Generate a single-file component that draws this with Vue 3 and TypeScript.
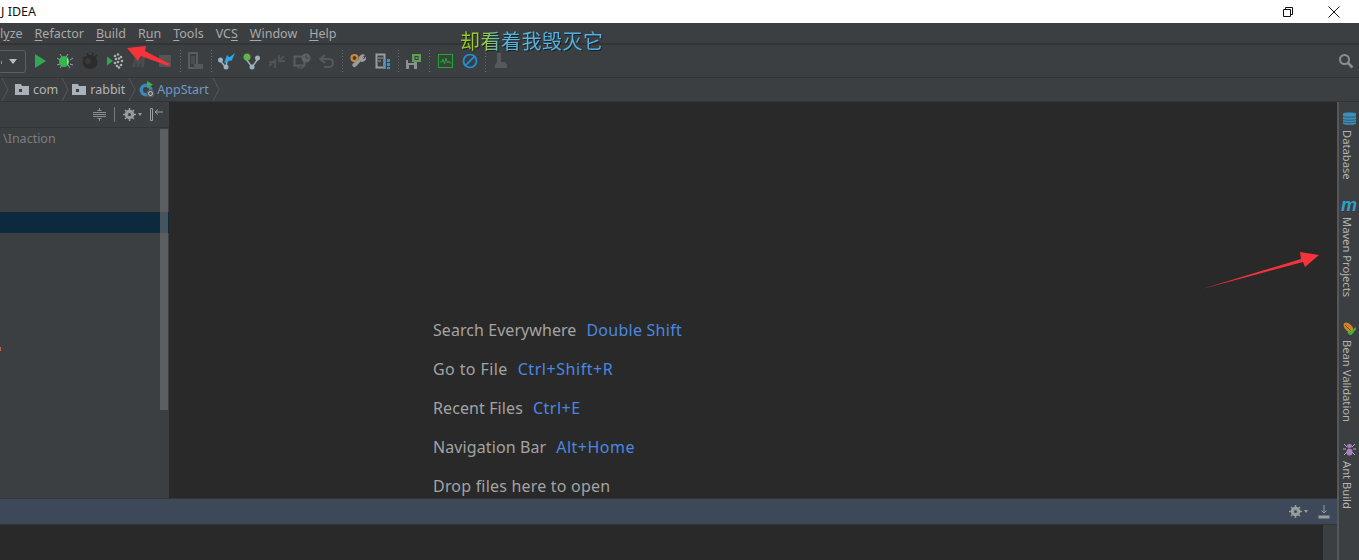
<script setup lang="ts">
interface Tip { label: string; key: string; labelTrack: number; keyTrack: number }

const welcome: Tip[] = [
  { label: 'Search Everywhere', key: 'Double Shift', labelTrack: 0.06, keyTrack: 0.25 },
  { label: 'Go to File', key: 'Ctrl+Shift+R', labelTrack: 0.4, keyTrack: 0.55 },
  { label: 'Recent Files', key: 'Ctrl+E', labelTrack: 0.1, keyTrack: 0.5 },
  { label: 'Navigation Bar', key: 'Alt+Home', labelTrack: 0.1, keyTrack: 0.5 },
  { label: 'Drop files here to open', key: '', labelTrack: 0.2, keyTrack: 0 },
]
</script>

<template>
  <div class="ide">
    <header class="title">
      <span class="title-text">J IDEA</span>
      <div class="win-buttons">
        <svg class="win" width="14" height="14" viewBox="0 0 14 14"><path d="M2.500 4.500h7v7h-7zM4.500 4.500v-2h7v7h-2" fill="none" stroke="#111" /></svg>
        <svg class="win close" width="14" height="14" viewBox="0 0 14 14"><path d="M1.500 1.500l11 11M12.500 1.500l-11 11" fill="none" stroke="#111" /></svg>
      </div>
    </header>

    <nav class="menu">
      <span>l<u>y</u>ze</span>
      <span><u>R</u>efactor</span>
      <span><u>B</u>uild</span>
      <span>R<u>u</u>n</span>
      <span><u>T</u>ools</span>
      <span>VC<u>S</u></span>
      <span><u>W</u>indow</span>
      <span><u>H</u>elp</span>
    </nav>

    <div class="toolbar">
      <div class="combo"><i class="combo-tick"></i><i class="combo-arrow"></i></div>
      <span class="slot"><svg width="16" height="16" viewBox="0 0 16 16"><path d="M3 1l11 7-11 7z" fill="#2fa84f" /></svg></span>
      <span class="slot"><svg width="18" height="18" viewBox="0 0 18 18"><path d="M4 2l2 3M12 2l-2 3M1 6l3 2M1 13l3-1M4 16l2-3M14 16l-2-3M17 6l-3 2M17 13l-3-1" stroke="#9aa2a8" fill="none" /><ellipse cx="8" cy="9.500" rx="5" ry="5.500" fill="#36b54a" /><path d="M11 5.500a5 5.500 0 0 1 0 8z" fill="#b9bec2" /></svg></span>
      <span class="slot"><svg width="18" height="18" viewBox="0 0 18 18"><ellipse cx="9" cy="10" rx="7.500" ry="7" fill="#2c2c2c" /><path d="M2 5l4 3M16 3l-4 4M6 1l2 4M12 1l-1 4" stroke="#2c2c2c" stroke-width="1.500" /><circle cx="7" cy="9" r="3" fill="#383838" /></svg></span>
      <span class="slot"><svg width="18" height="18" viewBox="0 0 18 18"><path d="M1 4.500l6 4.500-6 4.500z" fill="#2fa84f" /><g fill="#a9adb0"><circle cx="9" cy="4" r="1.300" /><circle cx="12" cy="2.500" r="1.300" /><circle cx="15" cy="5" r="1.300" /><circle cx="10" cy="7" r="1.300" /><circle cx="13" cy="6.500" r="1.300" /><circle cx="16" cy="9" r="1.300" /><circle cx="9" cy="11" r="1.300" /><circle cx="12" cy="10" r="1.300" /><circle cx="15" cy="13" r="1.300" /><circle cx="11" cy="14" r="1.300" /><circle cx="13" cy="15.500" r="1.300" /></g></svg></span>
      <span class="slot"><svg width="18" height="16" viewBox="0 0 18 16"><path d="M1 14l3-11h3l1 6 3-6h3l-1 11h-3l1-6-3 6H6l-1-6-1 6z" fill="#4a4c4e" /></svg></span>
      <span class="slot"><i class="stop"></i></span>
      <i class="sep"></i>
      <span class="slot"><svg width="16" height="18" viewBox="0 0 16 18"><path d="M1 1h8v15H1z" fill="none" stroke="#5a5d5f" stroke-width="2" /><path d="M6 12h9v5H6z" fill="#56595b" /><path d="M3 4h4v8H3z" fill="#4a4d4f" /></svg></span>
      <i class="sep"></i>
      <span class="slot"><svg width="20" height="18" viewBox="0 0 20 18"><circle cx="3.500" cy="8" r="2.500" fill="#9fb0bd" /><circle cx="9" cy="15" r="2.500" fill="#9fb0bd" /><path d="M3.500 9l5 6" stroke="#9fb0bd" stroke-width="1.500" /><path d="M9 15l1-6" stroke="#9fb0bd" stroke-width="1.500" /><path d="M18 1l-6.500 5 3 3zM7 11l8-3-5-5z" fill="#29a7e6" /></svg></span>
      <span class="slot"><svg width="18" height="18" viewBox="0 0 18 18"><path d="M3 7l6 8 6-8" fill="none" stroke="#9fb0bd" stroke-width="1.500" /><circle cx="4" cy="5" r="3.500" fill="#5fb548" /><circle cx="14.500" cy="6" r="2.500" fill="#9fb0bd" /><circle cx="9" cy="15" r="2.500" fill="#9fb0bd" /></svg></span>
      <span class="slot"><svg width="18" height="16" viewBox="0 0 18 16"><path d="M2 12l5-5v3M1 13l5-5M16 3l-5 5M11 2v6h6M1 9h6v6" fill="none" stroke="#505355" stroke-width="2" /></svg></span>
      <span class="slot"><svg width="18" height="16" viewBox="0 0 18 16"><path d="M1.500 3.500h10v9h-10z" fill="none" stroke="#5a5d5f" stroke-width="2" /><path d="M5 13v2h5v-2" stroke="#5a5d5f" fill="none" /><circle cx="13" cy="5" r="4.500" fill="#5f6264" /><path d="M13 2.500V5h2.500" stroke="#3c3f41" fill="none" /></svg></span>
      <span class="slot"><svg width="16" height="15" viewBox="0 0 16 15"><path d="M6 1L1.500 5 6 9M2 5h8a3.500 3.500 0 0 1 0 8H5" fill="none" stroke="#56595b" stroke-width="2.200" /></svg></span>
      <i class="sep"></i>
      <span class="slot"><svg width="16" height="17" viewBox="0 0 16 17"><path d="M7 11l7-7" stroke="#9a9da0" stroke-width="1" /><path d="M9 6.500a4 4 0 0 1 6-4.500l-2.500 2.500 1.500 1.500L16 3.500a4 4 0 0 1-5.500 5L6 13.500a2 2 0 0 1-3-3l5-4z" fill="#9a9da0" /><circle cx="4.500" cy="5" r="3" fill="none" stroke="#c98a3c" stroke-width="2.200" /></svg></span>
      <span class="slot"><svg width="16" height="16" viewBox="0 0 16 16"><path d="M1.500 1.500h8v13h-8z" fill="none" stroke="#9a9da0" stroke-width="2" /><path d="M3 5h5M3 8h3" stroke="#9a9da0" /><path d="M8 6h3v3H8zM12 6h3v3h-3zM8 10h3v3H8zM12 10h3v3h-3zM8 14h3v2H8zM12 14h3v2h-3z" fill="#3d8fc4" /></svg></span>
      <i class="sep"></i>
      <span class="slot"><svg width="16" height="16" viewBox="0 0 16 16"><path d="M0 7h11v9H0z" fill="#8d9092" /><path d="M2 7h6v3H2z" fill="#3c3f41" /><path d="M3 12h5v4H3z" fill="#3c3f41" /><path d="M6 1h9v8H6z" fill="#5f9e58" /><path d="M8.500 3h4v4h-4z" fill="#3c3f41" /><path d="M9.500 4h2v2h-2z" fill="#5f9e58" /></svg></span>
      <i class="sep"></i>
      <span class="slot"><svg width="15" height="14" viewBox="0 0 15 14"><rect x="0.500" y="0.500" width="14" height="13" fill="none" stroke="#22a62f" /><path d="M2 8h2l1-3 1.500 5L8 4l1.500 5L11 7l1 2h1.500" fill="none" stroke="#22a62f" /></svg></span>
      <span class="slot"><svg width="16" height="16" viewBox="0 0 16 16"><circle cx="8" cy="8" r="6.500" fill="none" stroke="#1f93dc" stroke-width="1.700" /><path d="M3.500 12.500l9-9" stroke="#1f93dc" stroke-width="1.700" /></svg></span>
      <i class="sep"></i>
      <span class="slot"><svg width="15" height="16" viewBox="0 0 15 16"><path d="M3 0h4v9H3zM1 12l2-3h8l2 3v3H1z" fill="#56595b" /></svg></span>
      <svg class="search" width="16" height="16" viewBox="0 0 16 16"><circle cx="6.500" cy="6.500" r="4.500" fill="none" stroke="#8b8e90" stroke-width="2" /><path d="M10 10l4.500 4.500" stroke="#8b8e90" stroke-width="2.500" /></svg>
    </div>

    <div class="crumbs">
      <svg class="chev first" width="10" height="23" viewBox="0 0 10 23"><path d="M2 0l6 11.500L2 23" fill="none" stroke="#55585a" /></svg>
      <svg class="folder" width="14" height="11" viewBox="0 0 14 11"><path d="M0 0h6l1 2h7v9H0z" fill="#a9b2b9" /><rect x="4" y="5" width="3" height="3" fill="#3c3f41" /></svg>
      <span class="crumb">com</span>
      <svg class="chev" width="10" height="23" viewBox="0 0 10 23"><path d="M2 0l6 11.500L2 23" fill="none" stroke="#55585a" /></svg>
      <svg class="folder" width="14" height="11" viewBox="0 0 14 11"><path d="M0 0h6l1 2h7v9H0z" fill="#a9b2b9" /><rect x="4" y="5" width="3" height="3" fill="#3c3f41" /></svg>
      <span class="crumb">rabbit</span>
      <svg class="chev" width="10" height="23" viewBox="0 0 10 23"><path d="M2 0l6 11.500L2 23" fill="none" stroke="#55585a" /></svg>
      <svg class="cls" width="17" height="17" viewBox="0 0 17 17"><circle cx="7" cy="9" r="6.500" fill="#3d86b5" /><circle cx="7" cy="9" r="3" fill="#3c3f41" /><path d="M8 0l6 3.500L8 7z" fill="#3fae4f" /><circle cx="11.500" cy="12.500" r="4" fill="#55585a" /><circle cx="11.500" cy="12.500" r="2" fill="none" stroke="#c5c8ca" /></svg>
      <span class="crumb current">AppStart</span>
      <svg class="chev" width="10" height="23" viewBox="0 0 10 23"><path d="M2 0l6 11.500L2 23" fill="none" stroke="#55585a" /></svg>
    </div>

    <div class="workspace">
      <div class="content">
        <div class="upper">
          <aside class="project">
            <div class="project-head">
              <svg width="13" height="13" viewBox="0 0 13 13"><path d="M0 6.500h13M6.500 0v3M6.500 10v3M4.500 2.500h4M4.500 10.500h4M0 4.500h13M0 8.500h13" fill="none" stroke="#8b8e90" /></svg>
              <i class="head-rule"></i>
              <span class="head-gear">
                <svg width="13" height="13" viewBox="0 0 13 13"><circle cx="6.500" cy="6.500" r="3.500" fill="none" stroke="#9a9da0" stroke-width="2.500" /><path d="M6.500 0v13M0 6.500h13M2 2l9 9M11 2l-9 9" stroke="#9a9da0" stroke-width="1.500" /><circle cx="6.500" cy="6.500" r="1.500" fill="#3c3f41" /></svg>
                <i class="mini-arrow"></i>
              </span>
              <svg width="13" height="13" viewBox="0 0 13 13"><path d="M0.500 0.500h2v12h-2zM5 4h8M5 4l3-2.500M5 4l3 2.500" fill="none" stroke="#9a9da0" /></svg>
            </div>
            <div class="tree">
              <div class="path-row">\Inaction</div>
              <div class="selected-row"></div>
              <i class="tree-mark"></i>
              <div class="scroll-thumb"></div>
            </div>
          </aside>
          <main class="editor">
            <p v-for="line in welcome" :key="line.label" class="tip">
              <span :style="{ letterSpacing: line.labelTrack + 'px' }">{{ line.label }}</span><span v-if="line.key" class="shortcut" :style="{ letterSpacing: line.keyTrack + 'px' }">{{ line.key }}</span>
            </p>
          </main>
        </div>
        <div class="tool-head">
          <span class="head-gear">
            <svg width="13" height="13" viewBox="0 0 13 13"><circle cx="6.500" cy="6.500" r="3.500" fill="none" stroke="#9a9da0" stroke-width="2.500" /><path d="M6.500 0v13M0 6.500h13M2 2l9 9M11 2l-9 9" stroke="#9a9da0" stroke-width="1.500" /><circle cx="6.500" cy="6.500" r="1.500" fill="#3d4958" /></svg>
            <i class="mini-arrow"></i>
          </span>
          <svg width="12" height="14" viewBox="0 0 12 14"><path d="M6 0v8M3.500 5.500L6 8l2.500-2.500" fill="none" stroke="#9a9da0" /><path d="M0.500 10.500h11v3H0.500z" fill="#9a9da0" /></svg>
        </div>
        <div class="tool-body"><div class="tool-scroll"></div></div>
      </div>

      <aside class="stripe">
        <div class="tool tool-db">
          <svg width="13" height="13" viewBox="0 0 13 13"><path d="M0 1.500C0 .3 13 .3 13 1.500v10c0 1.800-13 1.800-13 0z" fill="#3d8fb8" /><path d="M0 4.500c2 1 11 1 13 0M0 7.500c2 1 11 1 13 0M0 10c2 1 11 1 13 0" fill="none" stroke="#2a5a72" /></svg>
          <span>Database</span>
        </div>
        <div class="tool tool-maven">
          <span class="m-icon">m</span>
          <span>Maven Projects</span>
        </div>
        <div class="tool tool-bean">
          <svg width="13" height="13" viewBox="0 0 13 13"><ellipse cx="5.500" cy="5.500" rx="3.500" ry="6" transform="rotate(-45 5.500 5.500)" fill="#c98626" /><path d="M2 3l6 6" stroke="#7a5216" /><path d="M5 9.500l2.500 3L13 6" fill="none" stroke="#2ebd3a" stroke-width="2" /></svg>
          <span>Bean Validation</span>
        </div>
        <div class="tool tool-ant">
          <svg width="13" height="13" viewBox="0 0 13 13"><path d="M1 1l3 3M12 1L9 4M0 6h3M13 6h-3M1 12l3-3M12 12L9 9" stroke="#b9a4c4" /><ellipse cx="6.500" cy="3" rx="2.500" ry="2" fill="#a97fc0" /><ellipse cx="6.500" cy="9" rx="3" ry="3.500" fill="#a97fc0" /></svg>
          <span>Ant Build</span>
        </div>
      </aside>
    </div>

    <span class="slogan">却看着我毁灭它</span>
    <svg class="arrows" width="1359" height="560" viewBox="0 0 1359 560">
      <path d="M127 48l19-2-1 5 25 13-2 2-27-10-3 5z" fill="#f4333a" />
      <path d="M1202 289L1301 259L1300 252L1319 255L1305 267L1303 262z" fill="#f4333a" />
    </svg>
  </div>
</template>

<style>
html, body { margin: 0; background: #2b2b2b; overflow: hidden; }
</style>

<style scoped>
.ide {
  position: relative;
  width: 1359px;
  height: 560px;
  display: flex;
  flex-direction: column;
  overflow: hidden;
  background: #3c3f41;
  font-family: "Noto Sans", "Open Sans", sans-serif;
}
.title {
  height: 23px;
  flex: none;
  display: flex;
  align-items: center;
  justify-content: space-between;
  background: #fff;
}
.title-text {
  margin-left: 1px;
  font-size: 12.500px;
  color: #111;
}
.win-buttons { display: flex; gap: 32px; margin-right: 18px; }
.menu {
  height: 20px;
  flex: none;
  display: flex;
  align-items: center;
  gap: 12px;
  padding-left: 0;
  border-bottom: 2px solid #323436;
  font-size: 12.500px;
  color: #a9a9a9;
}
.menu u { text-underline-offset: 2px; }
.toolbar {
  height: 32px;
  flex: none;
  display: flex;
  align-items: center;
  padding-right: 5px;
  border-bottom: 1px solid #323436;
}
.combo {
  position: relative;
  width: 28px;
  height: 23px;
  margin-left: -2px;
  margin-right: 1.500px;
  box-sizing: border-box;
  border: 1px solid #5c5f61;
  border-radius: 3px;
  display: flex;
  align-items: center;
  justify-content: flex-end;
  padding-right: 8px;
  flex: none;
}
.combo-tick { position: absolute; left: 2px; top: 10px; width: 1px; height: 3px; background: #c9873a; }
.combo-arrow {
  width: 0;
  height: 0;
  border-left: 4px solid transparent;
  border-right: 4px solid transparent;
  border-top: 5px solid #bbb;
}
.slot {
  width: 25px;
  height: 22px;
  flex: none;
  display: flex;
  align-items: center;
  justify-content: center;
}
.stop { width: 12px; height: 12px; background: #555; }
.sep {
  width: 6px;
  height: 22px;
  flex: none;
  background: repeating-linear-gradient(#6a6d6f 0 1px, transparent 1px 3px) center / 1px 100% no-repeat;
}
.search { margin-left: auto; }
.crumbs {
  height: 24px;
  flex: none;
  display: flex;
  align-items: center;
  box-sizing: border-box;
  padding-bottom: 1px;
  border-bottom: 1px solid #323436;
  font-size: 12.500px;
  color: #b4b4b4;
}
.chev { flex: none; margin-right: 2px; }
.chev.first { margin-right: 5px; }
.folder { flex: none; margin-right: 4px; }
.crumb { margin-right: 2px; }
.cls { margin-right: 1px; flex: none; }
.current { color: #6b9ac8; }
.workspace { flex: 1; display: flex; min-height: 0; }
.content { flex: 1; min-width: 0; display: flex; flex-direction: column; }
.upper { height: 396px; flex: none; display: flex; }
.project { width: 169px; flex: none; display: flex; flex-direction: column; }
.project-head {
  height: 26px;
  flex: none;
  box-sizing: border-box;
  border-bottom: 1px solid #323436;
  display: flex;
  align-items: center;
  justify-content: flex-end;
  gap: 8px;
  padding-right: 6px;
}
.head-rule { width: 1px; height: 15px; background: #77797b; }
.head-gear { display: flex; align-items: center; gap: 2px; }
.mini-arrow {
  width: 0;
  height: 0;
  border-left: 2.500px solid transparent;
  border-right: 2.500px solid transparent;
  border-top: 3px solid #9a9da0;
}
.tree { position: relative; flex: 1; overflow: hidden; }
.path-row { position: absolute; left: 3px; top: 2px; font-size: 12.500px; color: #7c7e80; }
.selected-row { position: absolute; left: 0; right: 0; top: 84px; height: 21px; background: #0d293e; }
.tree-mark { position: absolute; left: 0; top: 219px; width: 1px; height: 4px; background: #c0663c; }
.scroll-thumb { position: absolute; right: 1px; top: 1px; width: 8px; height: 281px; background: rgba(118, 120, 122, 0.55); }
.editor {
  flex: 1;
  min-width: 0;
  background: #292929;
  box-sizing: border-box;
  padding: 217px 0 0 264px;
  overflow: hidden;
}
.tip {
  margin: 0 0 17px;
  height: 22px;
  line-height: 22px;
  font-size: 16px;
  color: #a3a3a3;
  white-space: nowrap;
}
.shortcut { margin-left: 10px; color: #4a88e0; }
.tool-head {
  height: 27px;
  flex: none;
  box-sizing: border-box;
  background: #3d4958;
  border-top: 1px solid #34373a;
  border-bottom: 1px solid #323436;
  display: flex;
  align-items: center;
  justify-content: flex-end;
  gap: 10px;
  padding-right: 7px;
}
.tool-body { flex: 1; background: #292929; display: flex; justify-content: flex-end; }
.tool-scroll { width: 14px; background: #3c3f41; }
.stripe {
  width: 22px;
  flex: none;
  position: relative;
  box-sizing: border-box;
  border-left: 2px solid #555759;
  background: #3c3f41;
}
.tool {
  position: absolute;
  left: 1px;
  width: 18px;
  display: flex;
  flex-direction: column;
  align-items: center;
  gap: 5px;
  font-size: 11.200px;
  color: #b4b4b4;
}
.tool span:not(.m-icon) { writing-mode: vertical-rl; white-space: nowrap; margin-right: 3px; }
.tool-db { top: 10px; }
.tool-maven { top: 97px; }
.tool-bean { top: 220px; }
.tool-ant { top: 341px; }
.m-icon {
  font: italic bold 18px/13px "Liberation Sans", sans-serif;
  color: #2f9fc9;
  height: 13px;
}
.slogan {
  position: absolute;
  left: 460px;
  top: 30px;
  font-family: "Noto Sans CJK SC", sans-serif;
  font-size: 20px;
  line-height: 22px;
  letter-spacing: 0.500px;
  white-space: nowrap;
  background: linear-gradient(90deg, #9cc51f 0%, #9fd02f 15%, #55b6e0 30%, #4fb3e6 100%);
  -webkit-background-clip: text;
  background-clip: text;
  color: transparent;
  filter: drop-shadow(1px 1px 0 #1d1f20);
}
.arrows { position: absolute; left: 0; top: 0; pointer-events: none; }
</style>
